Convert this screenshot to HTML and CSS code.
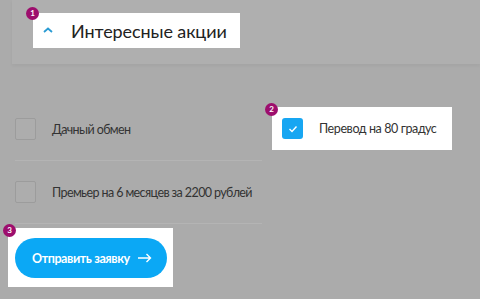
FILE: index.html
```html
<html>
<head>
<meta charset="utf-8">
<link rel="stylesheet" href="styles.css">
</head>
<body>
<div class="top">
  <div class="hl hl-head">
    <span class="badge b1">1</span>
    <svg class="chev" width="10" height="6" viewBox="0 0 10 6"><path d="M1 5 L5 1.5 L9 5" fill="none" stroke="#2a9bd3" stroke-width="1.8"/></svg>
    <span class="head-txt">Интересные акции</span>
  </div>
</div>

<div class="options">
  <div class="col">
    <div class="row">
      <span class="box"></span>
      <span class="lbl">Дачный обмен</span>
    </div>
    <div class="row">
      <span class="box"></span>
      <span class="lbl">Премьер на 6 месяцев за 2200 рублей</span>
    </div>
  </div>
  <div class="right">
    <div class="hl hl-opt">
      <span class="badge b2">2</span>
      <span class="box on"><svg width="10" height="8" viewBox="0 0 10 8"><path d="M1.5 4 L4 6.5 L8.5 1.5" fill="none" stroke="#fff" stroke-width="1.4"/></svg></span>
      <span class="lbl">Перевод на 80 градус</span>
    </div>
  </div>
</div>

<div class="hl hl-btn">
  <span class="badge b3">3</span>
  <button class="send">Отправить заявку
    <svg width="14" height="10" viewBox="0 0 14 10"><path d="M0 5 H12.5 M8.5 1 L12.5 5 L8.5 9" fill="none" stroke="#fff" stroke-width="1.4"/></svg>
  </button>
</div>
</body>
</html>
```

FILE: styles.css
```css
html, body
{
margin: 0;
padding: 0;
}
body
{
background: #ababab;
font-family: Lato, "Noto Sans", sans-serif;
width: 480px;
height: 299px;
overflow: hidden;
white-space: nowrap;
}
.top
{
margin-left: 12px;
height: 64px;
box-sizing: border-box;
padding: 13px 0 0 21px;
background: #afafaf;
box-shadow: 0 2px 3px rgba(0,0,0,0.04);
}
.hl
{
position: relative;
background: #fff;
}
.hl-head
{
display: flex;
align-items: center;
width: 207px;
height: 35px;
box-sizing: border-box;
padding-left: 10px;
}
.chev
{
margin-top: -1px;
}
.head-txt
{
margin-left: 18px;
font-size: 18px;
letter-spacing: -0.1px;
color: #222;
}
.badge
{
position: absolute;
width: 13px;
height: 13px;
border-radius: 50%;
background: #9d0e6d;
color: #fff;
font-size: 8px;
font-weight: bold;
line-height: 13px;
text-align: center;
}
.b1
{
left: -7px;
top: -6px;
}
.b2
{
left: -7px;
top: -4px;
}
.b3
{
left: -5px;
top: -4px;
}
.options
{
display: flex;
margin-top: 34px;
padding-left: 15px;
}
.col
{
width: 247px;
flex: none;
}
.row
{
display: flex;
align-items: center;
height: 62px;
border-bottom: 1px solid #b4b4b4;
}
.box
{
width: 19px;
height: 20px;
border: 1px solid #9c9c9c;
border-radius: 2px;
background: #adadad;
flex-shrink: 0;
}
.lbl
{
margin-left: 16px;
font-size: 12.5px;
letter-spacing: -0.4px;
color: #333;
}
.row .lbl
{
font-size: 12.5px;
letter-spacing: -0.6px;
}
.right
{
flex: none;
padding-left: 10px;
padding-top: 9px;
}
.hl-opt
{
display: flex;
align-items: center;
width: 180px;
height: 43px;
box-sizing: border-box;
padding-left: 10px;
}
.box.on
{
width: 21px;
height: 21px;
border: none;
border-radius: 3px;
background: #17a6f2;
display: flex;
align-items: center;
justify-content: center;
}
.hl-opt .lbl
{
margin-left: 16px;
}
.hl-btn
{
margin: 4px 0 0 8px;
width: 165px;
height: 59px;
box-sizing: border-box;
padding: 10px 0 0 7px;
}
.send
{
display: flex;
align-items: center;
width: 152px;
height: 40px;
border: none;
border-radius: 20px;
background: #0ba8f5;
color: #fff;
font-family: Lato, "Noto Sans", sans-serif;
font-size: 12.5px;
letter-spacing: -0.4px;
font-weight: bold;
padding: 0 0 0 17px;
}
.send svg
{
margin-left: 8px;
}
```
